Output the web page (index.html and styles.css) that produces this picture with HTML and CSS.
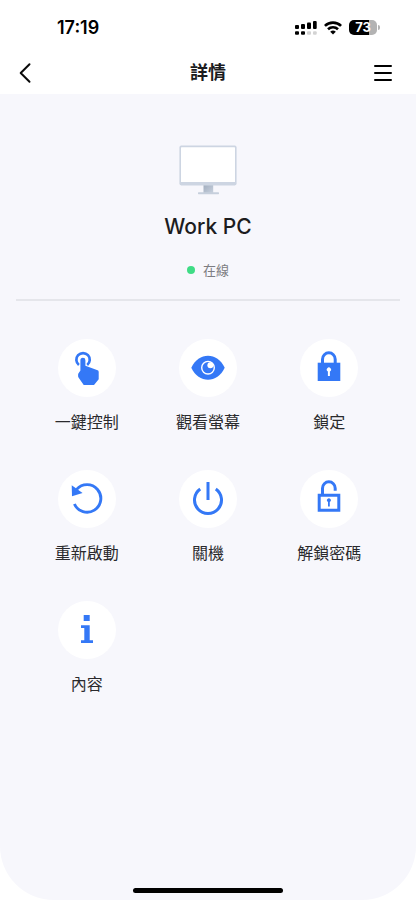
FILE: index.html
```
<!DOCTYPE html>
<html lang="zh-Hant">
<head>
<meta charset="utf-8">
<meta name="viewport" content="width=device-width, initial-scale=1">
<title>詳情</title>
<link rel="stylesheet" href="styles.css">
</head>
<body>
<div class="screen">
  <div class="status-bar">
    <time class="clock">17:19</time>
    <div class="indicators">
      <svg class="signal" width="22" height="16" viewBox="0 0 22 16" aria-hidden="true">
        <rect x="0" y="5" width="4" height="4" rx="1"/><rect x="6" y="4" width="4" height="5" rx="1"/>
        <rect x="12" y="2.5" width="4" height="6.5" rx="1"/><rect x="18" y="1" width="3.7" height="8" rx="1"/>
        <rect x="0" y="11.2" width="4" height="3.5" rx="1"/><rect x="6" y="11.2" width="4" height="3.5" rx="1"/>
        <g fill="#d3d3d3"><rect x="12" y="11.2" width="4" height="3.5" rx="1"/><rect x="18" y="11.2" width="3.7" height="3.5" rx="1"/></g>
      </svg>
      <svg class="wifi" width="18" height="14" viewBox="0 0 18 14" fill="none" stroke="#000" stroke-width="2.6" aria-hidden="true">
        <path d="M.9 4.9a11.6 11.6 0 0 1 16.2 0M4 8.2a7.2 7.2 0 0 1 10 0"/>
        <path d="M6.2 10.8a4 4 0 0 1 5.6 0L9 13.6z" fill="#000" stroke="none"/>
      </svg>
      <div class="battery"><span class="battery-level">73</span></div>
    </div>
  </div>
  <header class="nav-bar">
    <button class="nav-button" type="button" aria-label="返回">
      <svg width="18" height="22" viewBox="0 0 18 22" fill="none" stroke="#0a0a0a" stroke-width="2" stroke-linecap="round" stroke-linejoin="round"><path d="M13.5 2.3 4.7 11l8.8 8.7"/></svg>
    </button>
    <h1 class="nav-title">詳情</h1>
    <button class="nav-button" type="button" aria-label="選單">
      <svg width="18" height="18" viewBox="0 0 18 18" fill="none" stroke="#000" stroke-width="2" stroke-linecap="round"><path d="M1 2h16M1 9h16M1 16h16"/></svg>
    </button>
  </header>
  <main class="content">
    <section class="device">
      <svg width="58" height="50" viewBox="0 0 58 50" aria-hidden="true">
        <defs><linearGradient id="neck" x1="0" y1="0" x2="1" y2="1"><stop offset="0" stop-color="#9fabbc"/><stop offset="1" stop-color="#c8d1de"/></linearGradient></defs>
        <rect x="24.5" y="39" width="9.7" height="9" fill="url(#neck)"/>
        <rect x="19" y="47.2" width="21" height="2" rx=".6" fill="#c6cfdc"/>
        <rect x=".4" y=".6" width="57.2" height="39.8" rx="1.8" fill="#cdd5e2"/>
        <rect x="2" y="2.2" width="54" height="34.8" rx=".6" fill="#fff"/>
      </svg>
      <h2 class="device-name">Work PC</h2>
      <p class="device-status"><span class="status-dot"></span>在線</p>
    </section>
    <div class="actions">
      <button class="action" type="button">
        <span class="action-icon"><svg viewBox="0 0 58 58" aria-hidden="true">
          <path d="M20.9 26a6.7 6.7 0 1 1 8.3 0" fill="none" stroke="#3478f6" stroke-width="2.7"/>
          <path d="M22.4 31.6V21.3a2.5 2.5 0 0 1 5-.1v5.6l12.2 4.5q1.1.4 1.1 1.6v7.4L36 46H25.7l-5-7.2q-.6-.8-.6-1.8v-1.6q0-.8.6-1.5z"/>
        </svg></span>
        <span class="action-label">一鍵控制</span>
      </button>
      <button class="action" type="button">
        <span class="action-icon"><svg viewBox="0 0 58 58" aria-hidden="true">
          <path d="M12.3 28.7C19.5 12.7 38.5 12.7 45.7 28.7 38.5 44.7 19.5 44.7 12.3 28.7z"/>
          <circle cx="29" cy="28.7" r="6.3" fill="none" stroke="#fff" stroke-width="1.4"/>
          <circle cx="31.4" cy="26.2" r="3" fill="#fff"/>
        </svg></span>
        <span class="action-label">觀看螢幕</span>
      </button>
      <button class="action" type="button">
        <span class="action-icon"><svg viewBox="0 0 58 58" aria-hidden="true">
          <path d="M22.5 24.5v-4.3a6.35 6.35 0 0 1 12.7 0v4.3" fill="none" stroke="#3478f6" stroke-width="3"/>
          <path d="M17.7 23.7h22.6V42H17.7z"/>
          <path d="M27.9 32.4a2.1 2.1 0 1 1 2 0V37h-2z" fill="#fff"/>
        </svg></span>
        <span class="action-label">鎖定</span>
      </button>
      <button class="action" type="button">
        <span class="action-icon"><svg viewBox="0 0 58 58" aria-hidden="true">
          <path d="M18.6 19.4A13.8 13.8 0 1 1 16.4 34" fill="none" stroke="#3478f6" stroke-width="2.9"/>
          <path d="M13.7 15.2 24.6 23 14 26.2z"/>
        </svg></span>
        <span class="action-label">重新啟動</span>
      </button>
      <button class="action" type="button">
        <span class="action-icon"><svg viewBox="0 0 58 58" aria-hidden="true">
          <path d="M21.2 19a13.5 13.5 0 1 0 15.6 0M29 12v18" fill="none" stroke="#3478f6" stroke-width="3"/>
        </svg></span>
        <span class="action-label">關機</span>
      </button>
      <button class="action" type="button">
        <span class="action-icon"><svg viewBox="0 0 58 58" aria-hidden="true">
          <path d="M22.5 24.5v-6.3a6.35 6.35 0 0 1 12.7 0v2.5M19.2 25.2h19.6v15H19.2z" fill="none" stroke="#3478f6" stroke-width="3"/>
          <path d="M28 32a1.9 1.9 0 1 1 1.8 0v4.4H28z"/>
        </svg></span>
        <span class="action-label">解鎖密碼</span>
      </button>
      <button class="action" type="button">
        <span class="action-icon"><svg viewBox="0 0 58 58" aria-hidden="true">
          <path d="M25.7 14h6v6h-6zM23 24.3h8.7v15H35V42H23v-2.7h3.3V27H23z"/>
        </svg></span>
        <span class="action-label">內容</span>
      </button>
    </div>
    <div class="home-indicator"></div>
  </main>
</div>
</body>
</html>
```
FILE: styles.css
```
* {
  box-sizing: border-box;
}

body {
  margin: 0;
  background: #fff;
  color: #1c1c1e;
  font-family: Inter, "Noto Sans CJK TC", sans-serif;
}

button {
  border: 0;
  padding: 0;
  background: none;
  color: inherit;
  font: inherit;
  cursor: pointer;
}

svg {
  display: block;
}

.screen {
  display: flex;
  flex-direction: column;
  min-height: 100vh;
}

.status-bar {
  display: flex;
  align-items: center;
  justify-content: space-between;
  height: 55px;
  padding: 0 36px 0 57px;
}

.clock {
  color: #000;
  font-size: 18px;
  font-weight: 600;
}

.indicators {
  display: flex;
  align-items: center;
  gap: 7px;
}

.battery {
  position: relative;
  width: 28px;
  height: 15px;
  margin-right: 3px;
  border-radius: 5px;
  background: linear-gradient(90deg, #000 73%, #b3b3b3 73%);
  color: #fff;
  font-size: 13px;
  font-weight: 700;
  line-height: 15px;
  text-align: center;
}

.battery::after {
  content: "";
  position: absolute;
  top: 5px;
  right: -3px;
  width: 2px;
  height: 5px;
  border-radius: 0 2px 2px 0;
  background: #b3b3b3;
}

.nav-bar {
  display: flex;
  align-items: center;
  justify-content: space-between;
  height: 39px;
  padding: 0 16px 4px;
}

.nav-button {
  display: flex;
  align-items: center;
  justify-content: center;
  height: 32px;
  min-width: 18px;
}

.nav-button:last-child {
  margin-right: 8px;
}

.nav-title {
  flex: 1;
  margin: 0 0 0 8px;
  font-size: 18px;
  font-weight: 700;
  line-height: 24px;
  text-align: center;
}

.content {
  display: flex;
  flex: 1;
  flex-direction: column;
  padding: 51px 16px 7px;
  border-radius: 0 0 54px 54px;
  background: #f7f7fc;
}

.device {
  display: flex;
  flex-direction: column;
  align-items: center;
  padding-bottom: 18px;
  border-bottom: 2px solid #e5e6eb;
}

.device-name {
  margin: 16px 0 0;
  font-size: 21px;
  font-weight: 500;
  line-height: 32px;
}

.device-status {
  display: flex;
  align-items: center;
  gap: 8px;
  margin: 16px 0 0;
  color: #7d7d82;
  font-size: 13px;
  line-height: 22px;
}

.status-dot {
  width: 8px;
  height: 8px;
  border-radius: 50%;
  background: #3fdc85;
}

.actions {
  display: grid;
  grid-template-columns: repeat(3, 1fr);
  row-gap: 36px;
  padding: 38px 10px 24px;
}

.action {
  display: flex;
  flex-direction: column;
  align-items: center;
  gap: 13px;
}

.action-icon {
  width: 58px;
  height: 58px;
  border-radius: 50%;
  background: #fff;
  fill: #3478f6;
}

.action-label {
  color: #2a2a2d;
  font-size: 16px;
  line-height: 24px;
}

.home-indicator {
  align-self: center;
  width: 150px;
  height: 5px;
  margin-top: auto;
  border-radius: 3px;
  background: #000;
}
```
